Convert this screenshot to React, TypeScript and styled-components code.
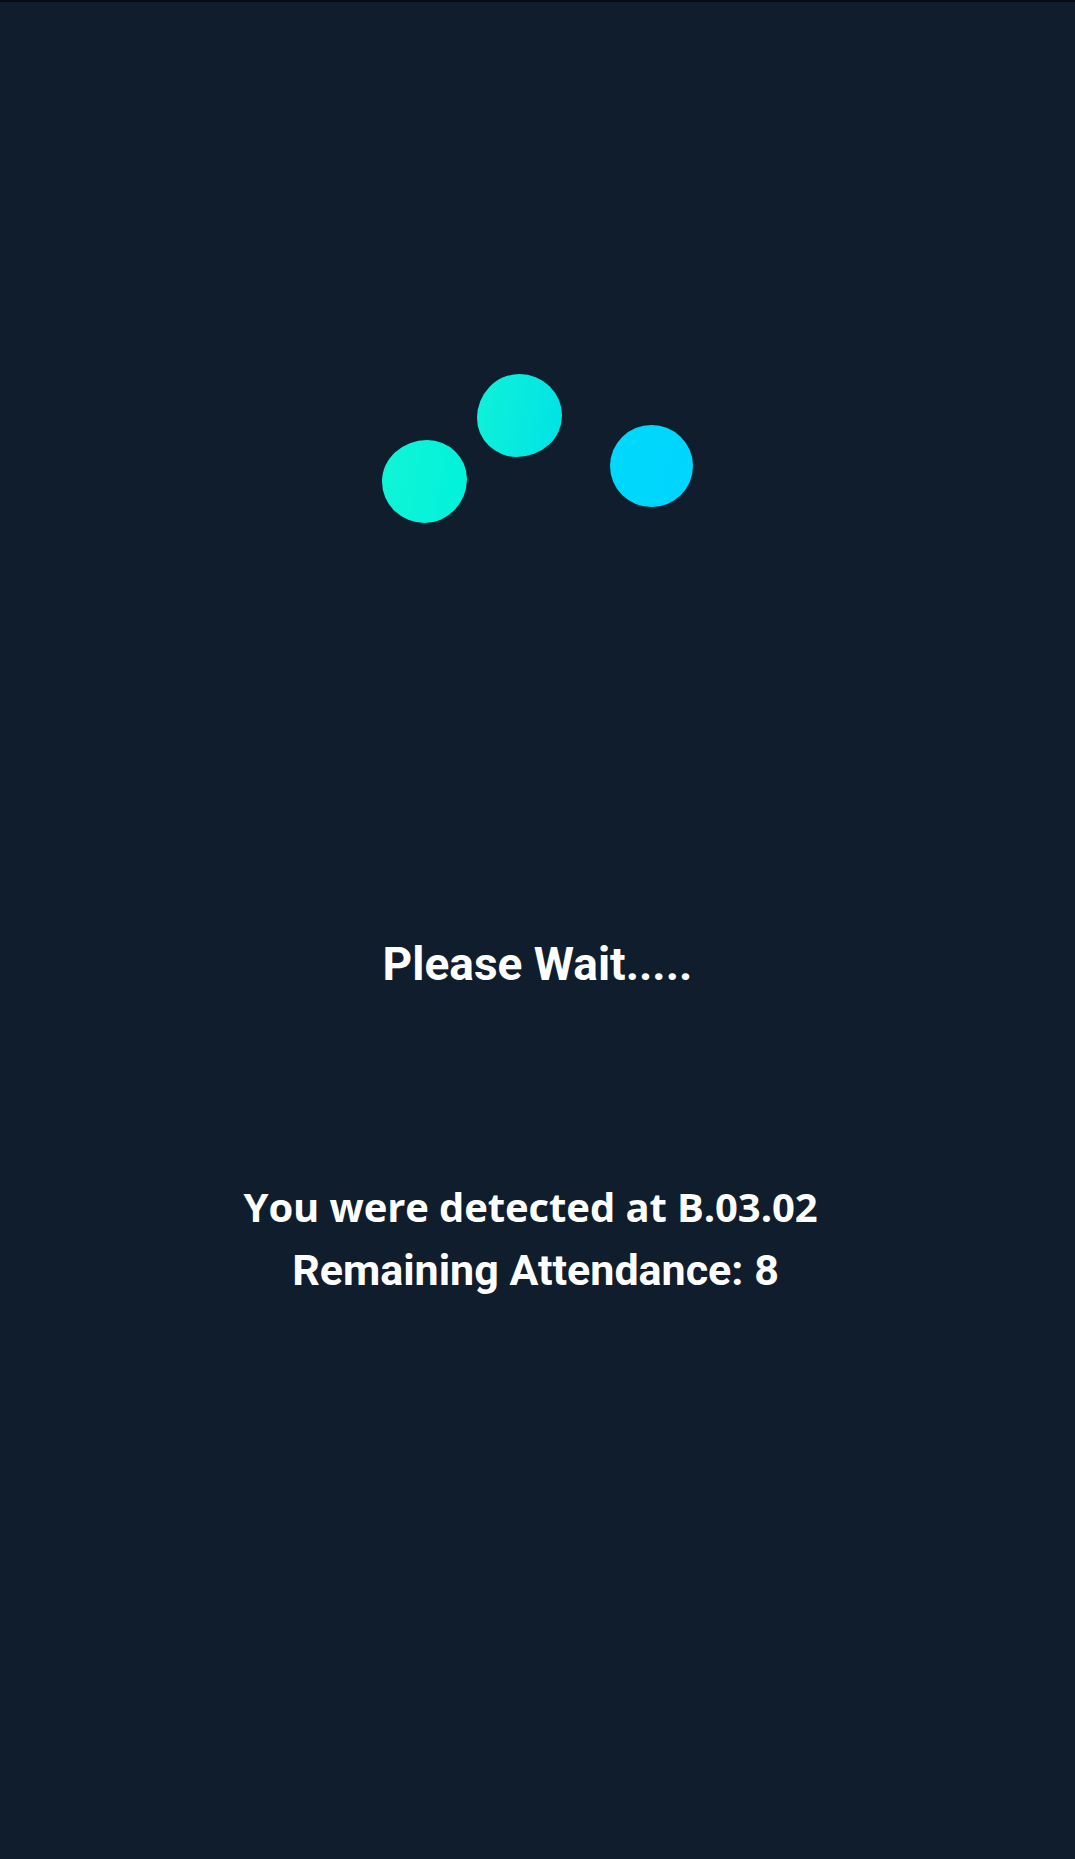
import { FC } from 'react';
import styled, { createGlobalStyle } from 'styled-components';

const GlobalStyle = createGlobalStyle`
  html, body {
    margin: 0;
    padding: 0;
    background: #0f1d2d;
  }
`;

type BlobProps = {
  $left: number;
  $top: number;
  $w: number;
  $h: number;
  $radius: string;
  $from: string;
  $to: string;
};

const App: FC = () => {
  return (
    <Page>
      <GlobalStyle />
      <Loader>
        <Blob $left={0} $top={66} $w={85} $h={83} $radius="53% 47% 50% 50% / 50% 47% 53% 50%" $from="#12f4d6" $to="#00f2dc" />
        <Blob $left={95} $top={0} $w={85} $h={83} $radius="50% 50% 53% 47% / 53% 50% 50% 47%" $from="#10f2d8" $to="#00e2e6" />
        <Blob $left={228} $top={51} $w={83} $h={82} $radius="50%" $from="#00d8fc" $to="#00d6fe" />
      </Loader>
      <Title>Please Wait.....</Title>
      <Info>
        <Detected>You were detected at B.03.02</Detected>
        <Remaining>Remaining Attendance: 8</Remaining>
      </Info>
    </Page>
  );
};

export default App;

const Page = styled.div`
  min-height: 1857px;
  border-top: 2px solid #060b14;
  background: #0f1d2d;
  display: flex;
  flex-direction: column;
  align-items: center;
  color: #ffffff;
`;

const Loader = styled.div`
  position: relative;
  width: 311px;
  height: 150px;
  margin-top: 372px;
`;

const Blob = styled.div<BlobProps>`
  position: absolute;
  left: ${p => p.$left}px;
  top: ${p => p.$top}px;
  width: ${p => p.$w}px;
  height: ${p => p.$h}px;
  border-radius: ${p => p.$radius};
  background: linear-gradient(100deg, ${p => p.$from}, ${p => p.$to});
`;

const Title = styled.h1`
  margin: 413px 0 0;
  font-family: Roboto, "Liberation Sans", sans-serif;
  font-weight: 700;
  font-size: 46px;
  line-height: 54px;
  text-align: center;
`;

const Info = styled.div`
  margin-top: 184px;
  display: flex;
  flex-direction: column;
  align-items: center;
`;

const Detected = styled.div`
  padding-right: 14px;
  font-family: "Open Sans", "Noto Sans", sans-serif;
  font-weight: 700;
  font-size: 40px;
  line-height: 63px;
  letter-spacing: -0.1px;
`;

const Remaining = styled.div`
  margin-top: 1px;
  padding-right: 4px;
  font-family: Roboto, "Liberation Sans", sans-serif;
  font-weight: 700;
  font-size: 43px;
  line-height: 63px;
`;
